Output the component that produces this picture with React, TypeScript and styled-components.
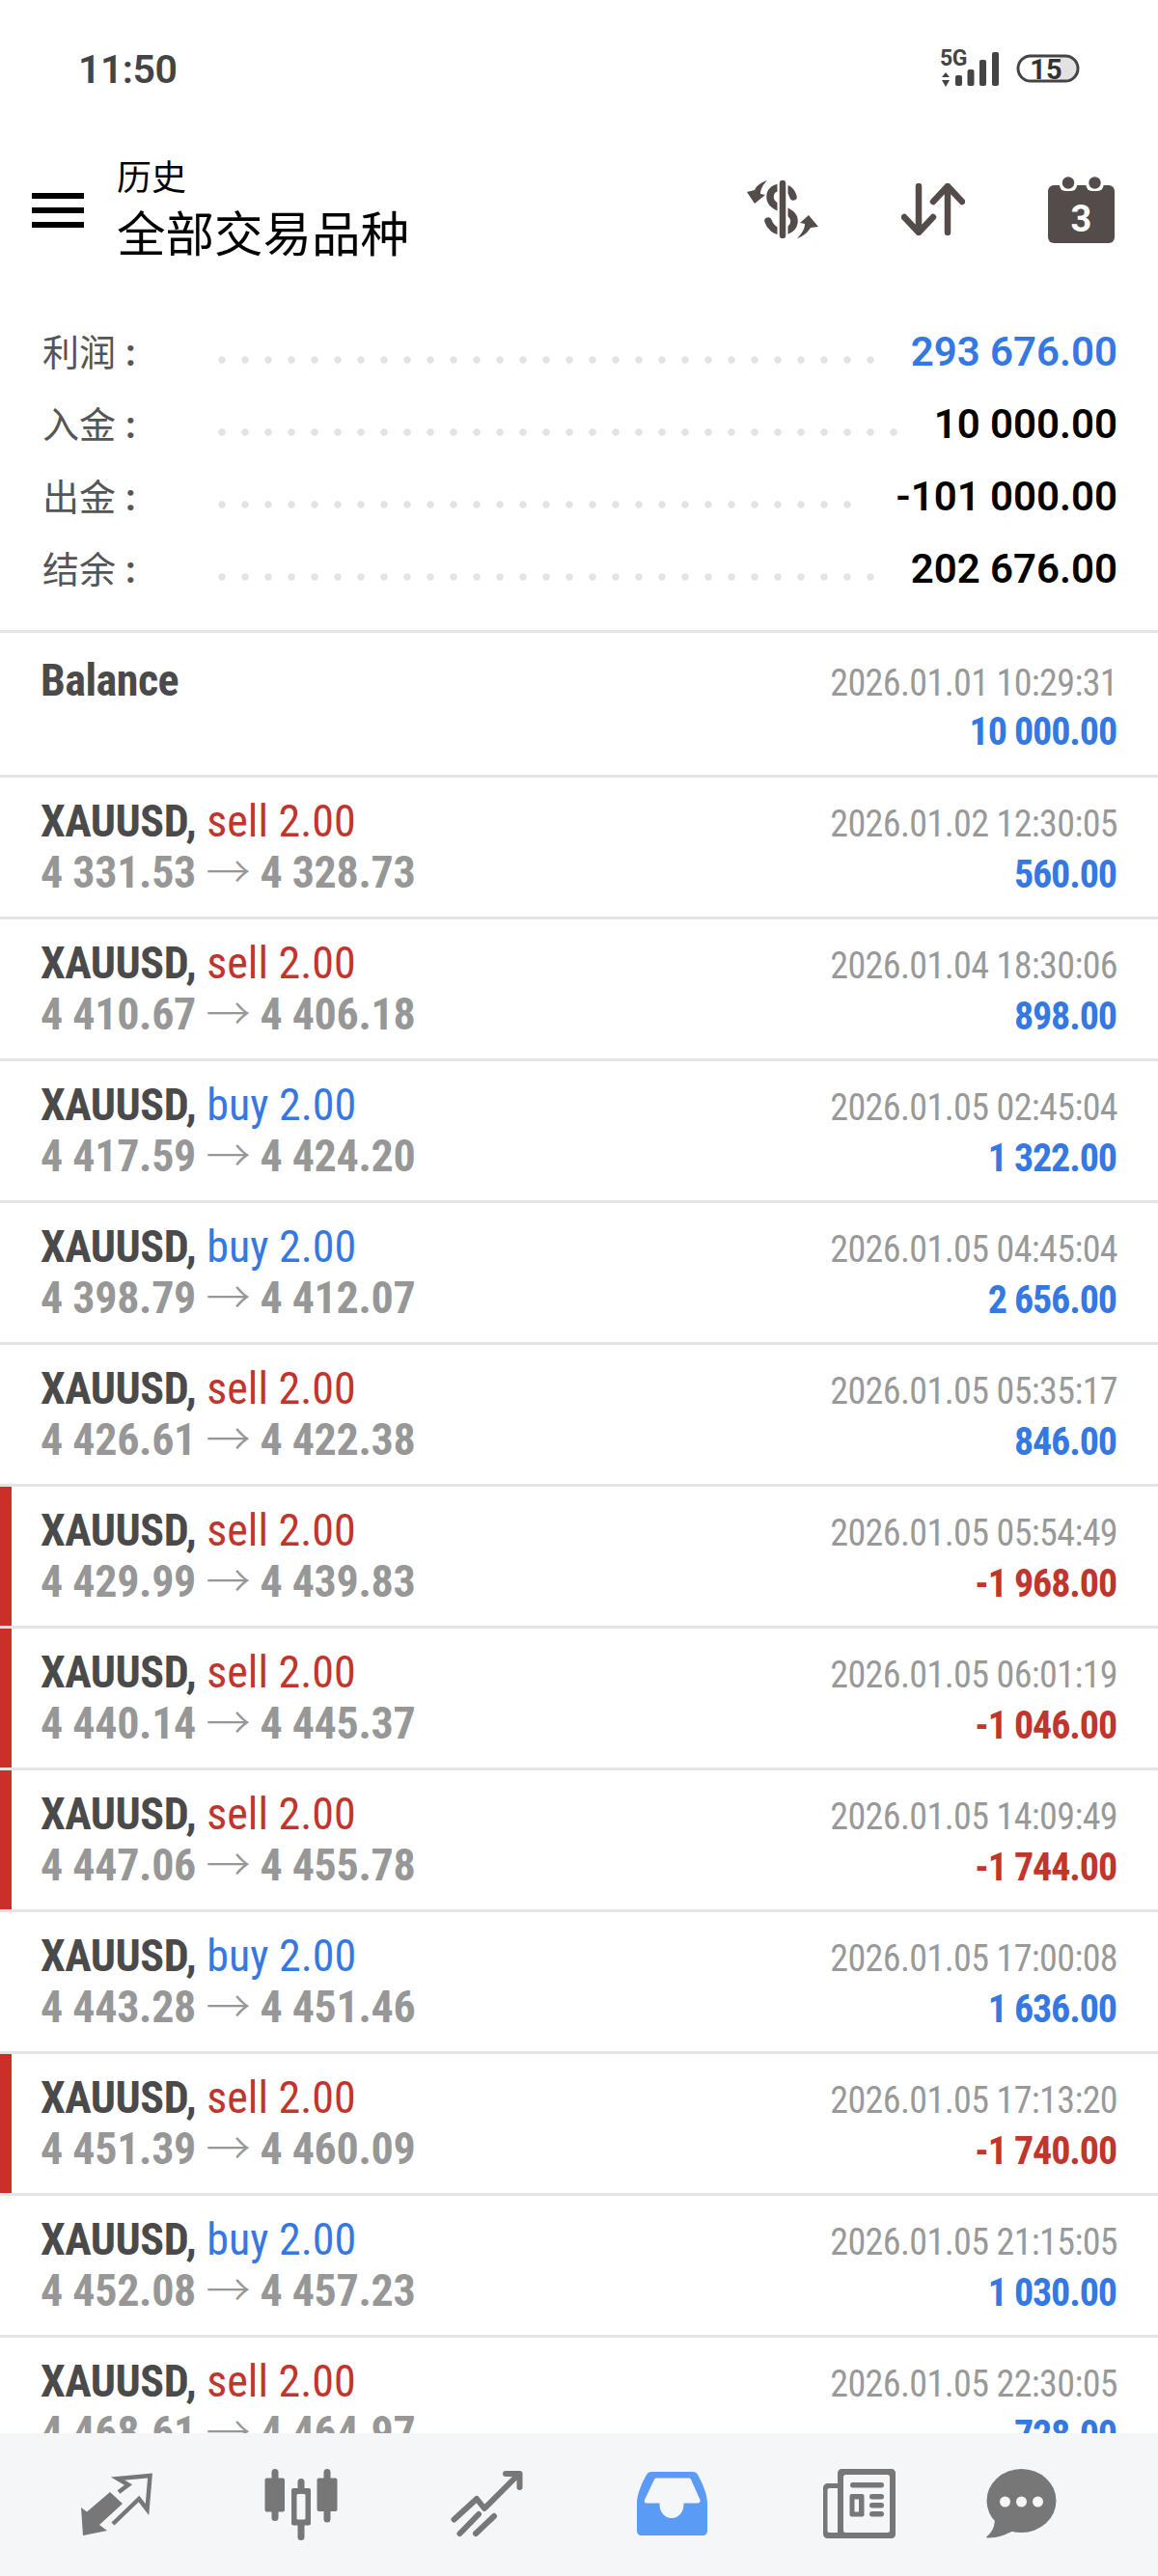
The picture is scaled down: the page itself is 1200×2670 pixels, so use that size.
import React from "react";
import styled, { createGlobalStyle } from "styled-components";

const DARK = "#4a4a4a";
const RED = "#c0352c";
const BLUE = "#3578e2";
const GREY = "#979797";
const ICON = "#544c4a";
const NAV = "#777777";
const NAV_BG = "#f5f6f7";

const Global = createGlobalStyle`
  html, body { margin: 0; padding: 0; background: #fff; }
  body { font-family: "Roboto", "Noto Sans CJK SC", sans-serif; }
`;

const Screen = styled.div`
  width: 1200px;
  height: 2670px;
  display: flex;
  flex-direction: column;
  overflow: hidden;
  background: #fff;
`;

const StatusBar = styled.div`
  flex: none;
  height: 142px;
  padding: 0 81px 0 81px;
  display: flex;
  align-items: center;
  justify-content: space-between;
`;

const Time = styled.div`
  font-size: 41px;
  font-weight: 600;
  color: #444;
  letter-spacing: -0.5px;
  margin-top: 2px;
`;

const StatusIcons = styled.div`
  display: flex;
  align-items: center;
  gap: 17px;
`;

const Header = styled.header`
  flex: none;
  height: 152px;
  padding: 0 45px 0 33px;
  display: flex;
  align-items: center;
`;

const Burger = styled.div`
  width: 54px;
  height: 36px;
  display: flex;
  flex-direction: column;
  justify-content: space-between;
`;

const BurgerBar = styled.span`
  display: block;
  height: 6px;
  background: #000;
`;

const Titles = styled.div`
  margin-left: 34px;
  margin-top: 2px;
  color: #000;
  display: flex;
  flex-direction: column;
  gap: 6px;
`;

const Title = styled.div`
  font-size: 36px;
  line-height: 44px;
`;

const Subtitle = styled.div`
  font-size: 50.5px;
  line-height: 62px;
`;

const Actions = styled.div`
  margin-left: auto;
  margin-top: -2px;
  display: flex;
  align-items: center;
  gap: 86px;
`;

const Summary = styled.section`
  flex: none;
  padding: 33px 42px 26px 44px;
`;

const SummaryRow = styled.div`
  height: 75px;
  display: flex;
  align-items: center;
`;

const Label = styled.div`
  flex: none;
  width: 174px;
  font-size: 38px;
  color: #555;
  margin-bottom: 5px;
`;

const Colon = styled.span`
  margin-left: 10px;
  font-weight: 700;
`;

const Dots = styled.div`
  flex: 1;
  height: 8px;
  margin: 16px 36px 0 0;
  background-image: radial-gradient(circle at center, #e3e3e3 3.4px, transparent 4px);
  background-size: 24px 8px;
  background-repeat: repeat-x;
`;

const Value = styled.div<{ $blue?: boolean }>`
  flex: none;
  font-size: 42px;
  font-weight: 600;
  color: ${(p) => (p.$blue ? BLUE : "#000")};
`;

const List = styled.main`
  flex: 1;
  min-height: 0;
  overflow: hidden;
  border-top: 3px solid #e4e4e4;
`;

const Row = styled.article<{ $loss?: boolean; $balance?: boolean }>`
  box-sizing: content-box;
  height: ${(p) => (p.$balance ? 123 : 124)}px;
  padding: ${(p) => (p.$balance ? 24 : 20)}px 42px 0 42px;
  border-bottom: 3px solid #e4e4e4;
  box-shadow: ${(p) => (p.$loss ? `inset 12px 0 0 #cb2f2a` : "none")};
`;

const Line = styled.div`
  height: 51px;
  line-height: 51px;
  display: flex;
  align-items: baseline;
  justify-content: space-between;
  font-stretch: 75%;
  white-space: nowrap;

  & + & {
    margin-top: 2px;
  }
`;

const Symbol = styled.span`
  font-size: 46px;
  font-weight: 700;
  letter-spacing: -0.5px;
  color: ${DARK};
`;

const Side = styled.span<{ $buy?: boolean }>`
  font-size: 46px;
  font-weight: 400;
  margin-left: 1px;
  color: ${(p) => (p.$buy ? BLUE : RED)};
`;

const Prices = styled.span`
  font-size: 46px;
  font-weight: 700;
  letter-spacing: -0.3px;
  color: ${GREY};
`;

const Arrow = styled.span`
  font-weight: 300;
`;

const DateText = styled.span`
  font-size: 38px;
  font-weight: 400;
  letter-spacing: -0.6px;
  color: #999;
`;

const Amount = styled.span<{ $neg?: boolean }>`
  font-size: 40px;
  font-weight: 700;
  letter-spacing: -1.1px;
  margin-right: 1px;
  color: ${(p) => (p.$neg ? RED : BLUE)};
`;

const Nav = styled.nav`
  flex: none;
  height: 148px;
  box-sizing: border-box;
  padding: 37px 0 0 83px;
  background: ${NAV_BG};
  display: grid;
  grid-template-columns: 189px 194px 192px 194px 167px 80px;
  align-items: start;
`;

const trades: [string, "sell" | "buy", string, string, string, string][] = [
  ["XAUUSD", "sell", "4 331.53", "4 328.73", "2026.01.02 12:30:05", "560.00"],
  ["XAUUSD", "sell", "4 410.67", "4 406.18", "2026.01.04 18:30:06", "898.00"],
  ["XAUUSD", "buy", "4 417.59", "4 424.20", "2026.01.05 02:45:04", "1 322.00"],
  ["XAUUSD", "buy", "4 398.79", "4 412.07", "2026.01.05 04:45:04", "2 656.00"],
  ["XAUUSD", "sell", "4 426.61", "4 422.38", "2026.01.05 05:35:17", "846.00"],
  ["XAUUSD", "sell", "4 429.99", "4 439.83", "2026.01.05 05:54:49", "-1 968.00"],
  ["XAUUSD", "sell", "4 440.14", "4 445.37", "2026.01.05 06:01:19", "-1 046.00"],
  ["XAUUSD", "sell", "4 447.06", "4 455.78", "2026.01.05 14:09:49", "-1 744.00"],
  ["XAUUSD", "buy", "4 443.28", "4 451.46", "2026.01.05 17:00:08", "1 636.00"],
  ["XAUUSD", "sell", "4 451.39", "4 460.09", "2026.01.05 17:13:20", "-1 740.00"],
  ["XAUUSD", "buy", "4 452.08", "4 457.23", "2026.01.05 21:15:05", "1 030.00"],
  ["XAUUSD", "sell", "4 468.61", "4 464.97", "2026.01.05 22:30:05", "728.00"],
];

const summary = [
  { label: "利润", value: "293 676.00", blue: true },
  { label: "入金", value: "10 000.00" },
  { label: "出金", value: "-101 000.00" },
  { label: "结余", value: "202 676.00" },
];

const SignalIcon = () => (
  <svg width="62" height="42" viewBox="0 0 62 42">
    <text x="0" y="17.5" fontFamily="Roboto" fontWeight="700" fontSize="23" letterSpacing="-0.5" fill="#444">5G</text>
    <path d="M6 25 L10 30 H2Z M6 40 L10 33 H2Z" fill="#444" />
    <rect x="16" y="28" width="7" height="11" rx="2" fill="#444" />
    <rect x="28.500" y="22" width="7" height="17" rx="2" fill="#444" />
    <rect x="41" y="12" width="7" height="27" rx="2" fill="#444" />
    <rect x="54" y="4" width="7" height="35" rx="2" fill="#444" />
  </svg>
);

const BatteryIcon = () => (
  <svg width="66" height="30" viewBox="0 0 66 30">
    <path d="M45 3 H51 A12 12 0 0 1 51 27 H45Z" fill="#e2e2e2" />
    <rect x="2" y="2" width="62" height="26" rx="13" fill="none" stroke="#444" strokeWidth="3" />
    <text x="31" y="26" textAnchor="middle" fontFamily="Roboto" fontWeight="700" fontSize="29" fill="#333">15</text>
  </svg>
);

const DollarIcon = () => (
  <svg width="74" height="60" viewBox="0 0 74 60">
    <path d="M48 17 C46 10 41 7 36 7 C29 7 24 11 24 17 C24 24 30 27 37 30 C44 33 49 36 49 42 C49 49 43 53 36 53 C29 53 24 48 22 42" fill="none" stroke={ICON} strokeWidth="7.5" strokeLinecap="round" />
    <line x1="37" y1="2" x2="37" y2="58" stroke="#fff" strokeWidth="11" />
    <line x1="37" y1="3" x2="37" y2="57" stroke={ICON} strokeWidth="6.5" strokeLinecap="round" />
    <path d="M21 0 C15 2 10 5 8 10 L0 12 L8 24 L19 15 L14 14 C14 9 17 4 21 0Z" fill={ICON} />
    <path d="M52 60 C58 58 63 54 66 49 L74 48 L64 36 L55 44 L60 45 C60 50 57 55 52 60Z" fill={ICON} />
  </svg>
);

const SortIcon = () => (
  <svg width="66" height="54" viewBox="0 0 66 54" fill="none" stroke={ICON} strokeWidth="6.5" strokeLinecap="round" strokeLinejoin="round">
    <path d="M18 3 V50 M3 35 L18 51 L33 35" />
    <path d="M48 51 V3 M33 19 L48 3 L63 19" />
  </svg>
);

const CalendarIcon = () => (
  <svg width="69" height="69" viewBox="0 0 69 69">
    <rect x="0" y="9" width="69" height="60" rx="6" fill={ICON} />
    <rect x="12" y="0" width="18" height="15" rx="6" fill="#fff" />
    <rect x="39.500" y="0" width="18" height="15" rx="6" fill="#fff" />
    <circle cx="21" cy="6.500" r="6.200" fill={ICON} />
    <circle cx="48.500" cy="6.500" r="6.200" fill={ICON} />
    <text x="34.500" y="57" textAnchor="middle" fontFamily="Roboto" fontWeight="700" fontSize="38" fill="#fff">3</text>
  </svg>
);

const TradeNavIcon = () => (
  <svg width="80" height="76" viewBox="0 0 80 76">
    <path d="M1 40 L7 44.500 L31 24 L44 36 L20 58 L28 64 L3 69Z" fill={NAV} />
    <path d="M40 24 L50 16.500 L39 10 L72.500 7 L69.500 42 L61 31 L34 57" fill="none" stroke={NAV} strokeWidth="4.500" />
  </svg>
);

const CandlesIcon = () => (
  <svg width="80" height="76" viewBox="0 0 80 76">
    <rect x="2.500" y="9.500" width="20.500" height="35" rx="2" fill={NAV} />
    <rect x="9.500" y="0" width="7" height="54" rx="3.500" fill={NAV} />
    <rect x="30" y="20" width="20" height="38.500" rx="2" fill={NAV} />
    <rect x="36.500" y="10" width="7" height="64" rx="3.500" fill={NAV} />
    <rect x="35.500" y="26" width="9" height="26.500" rx="1.500" fill={NAV_BG} />
    <rect x="56.500" y="9.500" width="21" height="34.500" rx="2" fill={NAV} />
    <rect x="63.500" y="0" width="7" height="55.500" rx="3.500" fill={NAV} />
  </svg>
);

const ChartIcon = () => (
  <svg width="80" height="76" viewBox="0 0 80 76" fill="none" stroke={NAV} strokeWidth="6" strokeLinecap="round" strokeLinejoin="round">
    <path d="M4.500 52.500 L28 31 L36 41 L71 6" />
    <path d="M58 5 H72.500 V19" />
    <path d="M10.500 67 L30 47 M27 67 L46 49" />
  </svg>
);

const InboxIcon = () => (
  <svg width="80" height="76" viewBox="0 0 80 76">
    <path d="M17 3 H60 C62 3 64 4 65 6 C70 15 75 26 75 36 V64 C75 67 73 69 70 69 H7 C4 69 2 67 2 64 V36 C2 26 7 15 12 6 C13 4 15 3 17 3Z" fill="#5a9bf6" />
    <path d="M23 9.500 H55 C57 9.500 58 10 58.500 12 L67.500 32 C68 34 67 35.500 65 35.500 H50.500 C51 45 45 51 38 51 C31 51 25 45 25.500 35.500 H12 C10 35.500 9.500 34 10 32 L19.500 12 C20 10 21 9.500 23 9.500Z" fill={NAV_BG} />
  </svg>
);

const NewsIcon = () => (
  <svg width="80" height="76" viewBox="0 0 80 76">
    <path d="M20 0 H72 C74 0 76 2 76 4 V68 C76 70 74 72 72 72 H6 C3 72 1 70 1 67 V20 C1 17 3 15 6 15 H16 V4 C16 2 18 0 20 0Z" fill={NAV} />
    <rect x="22" y="6" width="48" height="60" rx="2.500" fill={NAV_BG} />
    <path d="M8 66 H16 V20 H8 C6 20 5.500 21 5.500 22 V64 C5.500 65 6 66 8 66Z" fill={NAV_BG} />
    <rect x="29" y="14" width="35" height="5.500" rx="2.700" fill={NAV} />
    <rect x="28.500" y="26" width="15" height="23.500" rx="2" fill={NAV} />
    <rect x="33.500" y="31.500" width="4.500" height="13" fill={NAV_BG} />
    <rect x="49" y="26" width="15" height="5.500" rx="2.700" fill={NAV} />
    <rect x="49" y="35" width="15" height="5.500" rx="2.700" fill={NAV} />
    <rect x="49" y="44" width="15" height="5.500" rx="2.700" fill={NAV} />
  </svg>
);

const ChatIcon = () => (
  <svg width="80" height="76" viewBox="0 0 80 76">
    <ellipse cx="39.500" cy="33" rx="36" ry="33" fill={NAV} />
    <path d="M12 50 C12 60 9 66 3.500 70 C3 71 4 71.500 5 71.500 C15 71.500 24 68 31 64Z" fill={NAV} />
    <circle cx="22.500" cy="34" r="5.500" fill={NAV_BG} />
    <circle cx="39.500" cy="34" r="5.500" fill={NAV_BG} />
    <circle cx="56.500" cy="34" r="5.500" fill={NAV_BG} />
  </svg>
);

export default function App() {
  return (
    <Screen>
      <Global />
      <StatusBar>
        <Time>11:50</Time>
        <StatusIcons>
          <SignalIcon />
          <BatteryIcon />
        </StatusIcons>
      </StatusBar>
      <Header>
        <Burger>
          <BurgerBar />
          <BurgerBar />
          <BurgerBar />
        </Burger>
        <Titles>
          <Title>历史</Title>
          <Subtitle>全部交易品种</Subtitle>
        </Titles>
        <Actions>
          <DollarIcon />
          <SortIcon />
          <CalendarIcon />
        </Actions>
      </Header>
      <Summary>
        {summary.map((s) => (
          <SummaryRow key={s.label}>
            <Label>
              {s.label}
              <Colon>:</Colon>
            </Label>
            <Dots />
            <Value $blue={s.blue}>{s.value}</Value>
          </SummaryRow>
        ))}
      </Summary>
      <List>
        <Row $balance>
          <Line>
            <Symbol>Balance</Symbol>
            <DateText>2026.01.01 10:29:31</DateText>
          </Line>
          <Line>
            <span />
            <Amount>10 000.00</Amount>
          </Line>
        </Row>
        {trades.map(([sym, side, open, close, date, amount]) => (
          <Row key={date} $loss={amount.startsWith("-")}>
            <Line>
              <span>
                <Symbol>{sym}, </Symbol>
                <Side $buy={side === "buy"}>{side} 2.00</Side>
              </span>
              <DateText>{date}</DateText>
            </Line>
            <Line>
              <Prices>
                {open} <Arrow>→</Arrow> {close}
              </Prices>
              <Amount $neg={amount.startsWith("-")}>{amount}</Amount>
            </Line>
          </Row>
        ))}
      </List>
      <Nav>
        <TradeNavIcon />
        <CandlesIcon />
        <ChartIcon />
        <InboxIcon />
        <NewsIcon />
        <ChatIcon />
      </Nav>
    </Screen>
  );
}
